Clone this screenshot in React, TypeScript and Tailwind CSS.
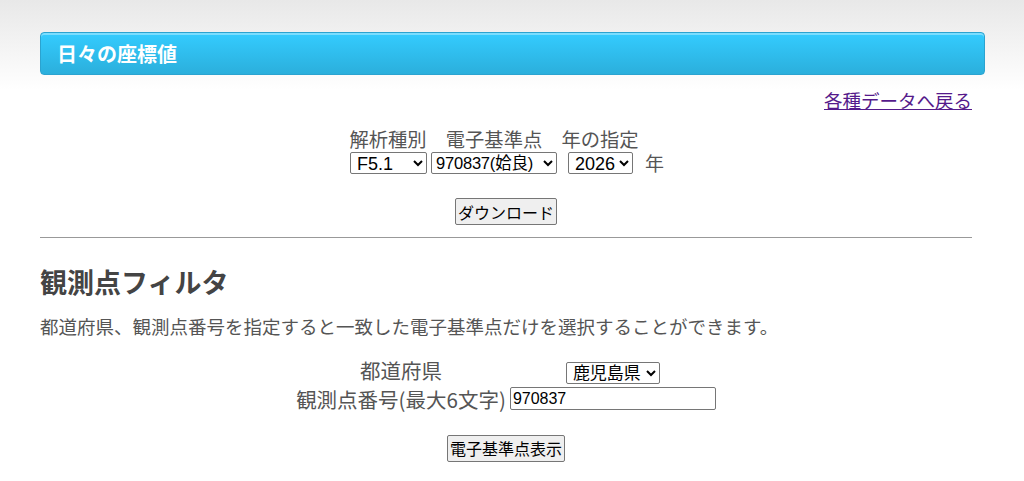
import { useState } from "react";

const jp = "font-['Noto_Sans_CJK_JP',sans-serif]";
const ctrl = "font-['Liberation_Sans','Noto_Sans_CJK_JP',sans-serif] text-black";

export default function App() {
    const [analysis, setAnalysis] = useState("F5.1");
    const [station, setStation] = useState("970837");
    const [year, setYear] = useState("2026");
    const [pref, setPref] = useState("46");
    const [code, setCode] = useState("970837");

    return (
        <div className={`min-h-[481px] bg-linear-to-b from-[#e8e8e8] to-white to-[90px] ${jp} text-[#555]`}>
            <div className="pt-[32px] pl-[40px]">
                {/* Title bar */}
                <div className="w-[945px] h-[43px] rounded-[4px] border border-[#2ba3d0] bg-linear-to-b from-[#34ccff] to-[#2bafdc] shadow-[inset_0_2px_0_rgba(255,255,255,0.35)] flex items-center px-[16px]">
                    <h1 className="text-white text-[20px] font-semibold leading-none">日々の座標値</h1>
                </div>

                <div className="w-[932px]">
                    <div className="flex justify-end mt-[12px] h-[26px]">
                        <a href="#" className="text-[#551a8b] underline text-[18.5px] leading-[26px]">各種データへ戻る</a>
                    </div>

                    {/* Download form */}
                    <div className="text-center mt-[14px]">
                        <div className="text-[19.3px] leading-[24px] whitespace-pre pr-[24px]">解析種別　電子基準点　年の指定</div>
                        <div className="flex justify-center items-center gap-[4px] h-[24px] ml-[2px]">
                            <select value={analysis} onChange={(e) => setAnalysis(e.target.value)} className={`${ctrl} text-[18px] w-[77px] h-[22px] border border-[#767676] rounded-[2px] bg-white pl-[2px]`}>
                                <option>F5.1</option>
                                <option>R5.1</option>
                            </select>
                            <select value={station} onChange={(e) => setStation(e.target.value)} className={`${ctrl} text-[16.5px] tracking-[-0.2px] w-[126px] h-[22px] border border-[#767676] rounded-[2px] bg-white pl-0`}>
                                <option value="970837">970837(姶良)</option>
                            </select>
                            <select value={year} onChange={(e) => setYear(e.target.value)} className={`${ctrl} text-[18px] w-[65px] h-[22px] border border-[#767676] rounded-[2px] bg-white pl-[2px] ml-[7px]`}>
                                <option>2026</option>
                                <option>2025</option>
                            </select>
                            <span className="text-[19px] ml-[8px]">年</span>
                        </div>
                        <button className={`${jp} text-[16px] text-black mt-[23px] h-[27px] px-[2px] bg-[#efefef] border border-[#767676] rounded-[2px] leading-none`}>ダウンロード</button>
                    </div>

                    <hr className="mt-[12px] border-t border-[#999]" />

                    {/* Filter */}
                    <h2 className="text-[27px] font-bold text-[#444] mt-[26px] leading-[36px]">観測点フィルタ</h2>
                    <p className="text-[18.5px] mt-[13px] leading-[26px]">都道府県、観測点番号を指定すると一致した電子基準点だけを選択することができます。</p>

                    <div className="flex justify-center mt-[16px]">
                        <table className="text-[20.5px] text-center">
                            <tbody>
                                <tr className="h-[26px]">
                                    <td className="px-[2px] leading-[22px]">都道府県</td>
                                    <td className="px-[2px]">
                                        <select value={pref} onChange={(e) => setPref(e.target.value)} className={`${ctrl} text-[17px] w-[94px] h-[22px] border border-[#767676] rounded-[2px] bg-white pl-[2px]`}>
                                            <option value="46">鹿児島県</option>
                                        </select>
                                    </td>
                                </tr>
                                <tr className="h-[26px]">
                                    <td className="px-[2px] leading-[22px]">観測点番号(最大6文字)</td>
                                    <td className="px-[2px]">
                                        <input value={code} onChange={(e) => setCode(e.target.value)} className={`${ctrl} text-[16px] w-[206px] h-[23px] border border-[#767676] rounded-[2px] bg-white px-[2px] block`} />
                                    </td>
                                </tr>
                            </tbody>
                        </table>
                    </div>

                    <div className="text-center mt-[23px]">
                        <button className={`${jp} text-[16px] text-black h-[27px] px-[2px] bg-[#efefef] border border-[#767676] rounded-[2px] leading-none`}>電子基準点表示</button>
                    </div>
                </div>
            </div>
        </div>
    );
}
